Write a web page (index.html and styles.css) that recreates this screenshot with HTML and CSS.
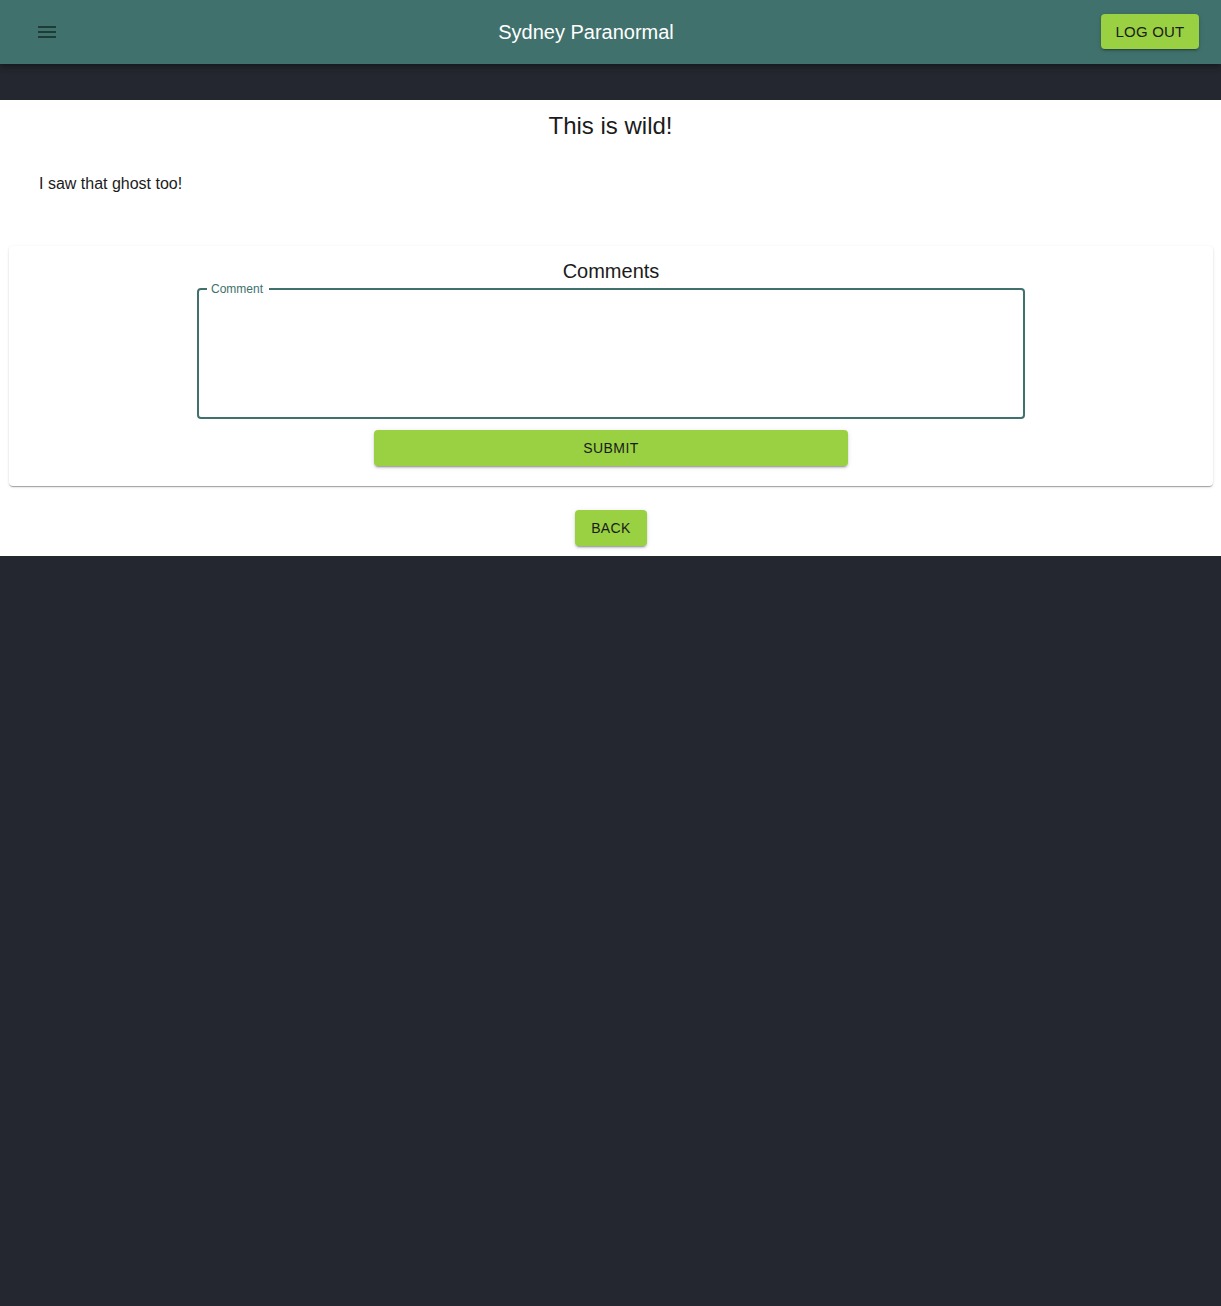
FILE: index.html
```html
<!DOCTYPE html>
<html lang="en">
<head>
<meta charset="utf-8">
<title>Sydney Paranormal</title>
<link rel="stylesheet" href="styles.css">
</head>
<body>
<header class="appbar">
  <button class="icon-btn" aria-label="menu">
    <svg width="24" height="24" viewBox="0 0 24 24"><path d="M3 18h18v-2H3v2zm0-5h18v-2H3v2zm0-7v2h18V6H3z" fill="#1d3b37"/></svg>
  </button>
  <div class="brand">Sydney Paranormal</div>
  <button class="btn btn-header">Log Out</button>
</header>

<main class="page">
  <section class="post">
    <h1 class="post-title">This is wild!</h1>
    <p class="post-body">I saw that ghost too!</p>

    <div class="comments-card">
      <h2 class="comments-title">Comments</h2>
      <form class="comment-form">
        <fieldset class="field">
          <legend class="field-label">Comment</legend>
          <textarea class="field-input" aria-label="Comment"></textarea>
        </fieldset>
        <button type="button" class="btn btn-submit">Submit</button>
      </form>
    </div>

    <div class="back-row">
      <button class="btn btn-back">Back</button>
    </div>
  </section>
</main>
</body>
</html>
```

FILE: styles.css
```css
* { box-sizing: border-box; }

html, body {
  margin: 0;
  padding: 0;
}

body {
  background: #24272f;
  font-family: "Liberation Sans", Arial, Helvetica, sans-serif;
  color: #1b1b1b;
  min-height: 1306px;
}

.appbar {
  height: 64px;
  background: #40716c;
  display: flex;
  align-items: center;
  padding: 0 22px 0 23px;
  box-shadow: 0 2px 4px -1px rgba(0,0,0,0.2), 0 4px 5px 0 rgba(0,0,0,0.14), 0 1px 10px 0 rgba(0,0,0,0.12);
  position: relative;
  z-index: 2;
}

.icon-btn {
  width: 48px;
  height: 48px;
  padding: 12px;
  border: 0;
  background: transparent;
  display: flex;
  align-items: center;
  justify-content: center;
  cursor: pointer;
}

.brand {
  flex: 1;
  text-align: center;
  color: #ffffff;
  font-size: 20px;
  line-height: 32px;
}

.btn {
  font-family: "Liberation Sans", Arial, Helvetica, sans-serif;
  font-size: 14px;
  letter-spacing: 0.4px;
  text-transform: uppercase;
  white-space: nowrap;
  color: #1b1b1b;
  background: #99d142;
  border: 0;
  border-radius: 4px;
  height: 36px;
  padding: 0 16px;
  cursor: pointer;
  box-shadow: 0 3px 1px -2px rgba(0,0,0,0.2), 0 2px 2px 0 rgba(0,0,0,0.14), 0 1px 5px 0 rgba(0,0,0,0.12);
}

.btn-header {
  width: 98px;
  height: 35px;
  padding: 0;
  font-size: 15px;
  letter-spacing: 0.2px;
  margin-top: -2px;
}

.page {
  padding-top: 36px;
}

.post {
  background: #ffffff;
  padding: 10px 0 10px;
}

.post-title {
  margin: 0;
  text-align: center;
  font-size: 24px;
  font-weight: 400;
  line-height: 32px;
}

.post-body {
  margin: 30px 0 0 39px;
  font-size: 16px;
  line-height: 24px;
}

.comments-card {
  margin: 50px 8px 0 9px;
  background: #ffffff;
  border-radius: 4px;
  box-shadow: 0 2px 1px -1px rgba(0,0,0,0.2), 0 1px 1px 0 rgba(0,0,0,0.14), 0 1px 3px 0 rgba(0,0,0,0.12);
  padding: 9px 0 20px;
}

.comments-title {
  margin: 0;
  text-align: center;
  font-size: 20px;
  font-weight: 400;
  line-height: 32px;
}

.comment-form {
  display: flex;
  flex-direction: column;
  align-items: center;
}

.field {
  margin: -5px 0 0;
  width: 828px;
  height: 137px;
  border: 2px solid #40716c;
  border-radius: 4px;
  padding: 0 8px;
  display: flex;
}

.field-label {
  font-size: 12px;
  line-height: 14px;
  color: #40716c;
  padding: 0 6px 0 4px;
}

.field-input {
  flex: 1;
  border: 0;
  outline: none;
  resize: none;
  background: transparent;
  font: inherit;
}

.btn-submit {
  margin-top: 11px;
  width: 474px;
}

.back-row {
  display: flex;
  justify-content: center;
  padding-top: 24px;
}

.btn-back {
  width: 72px;
  margin-left: 1px;
}
```
